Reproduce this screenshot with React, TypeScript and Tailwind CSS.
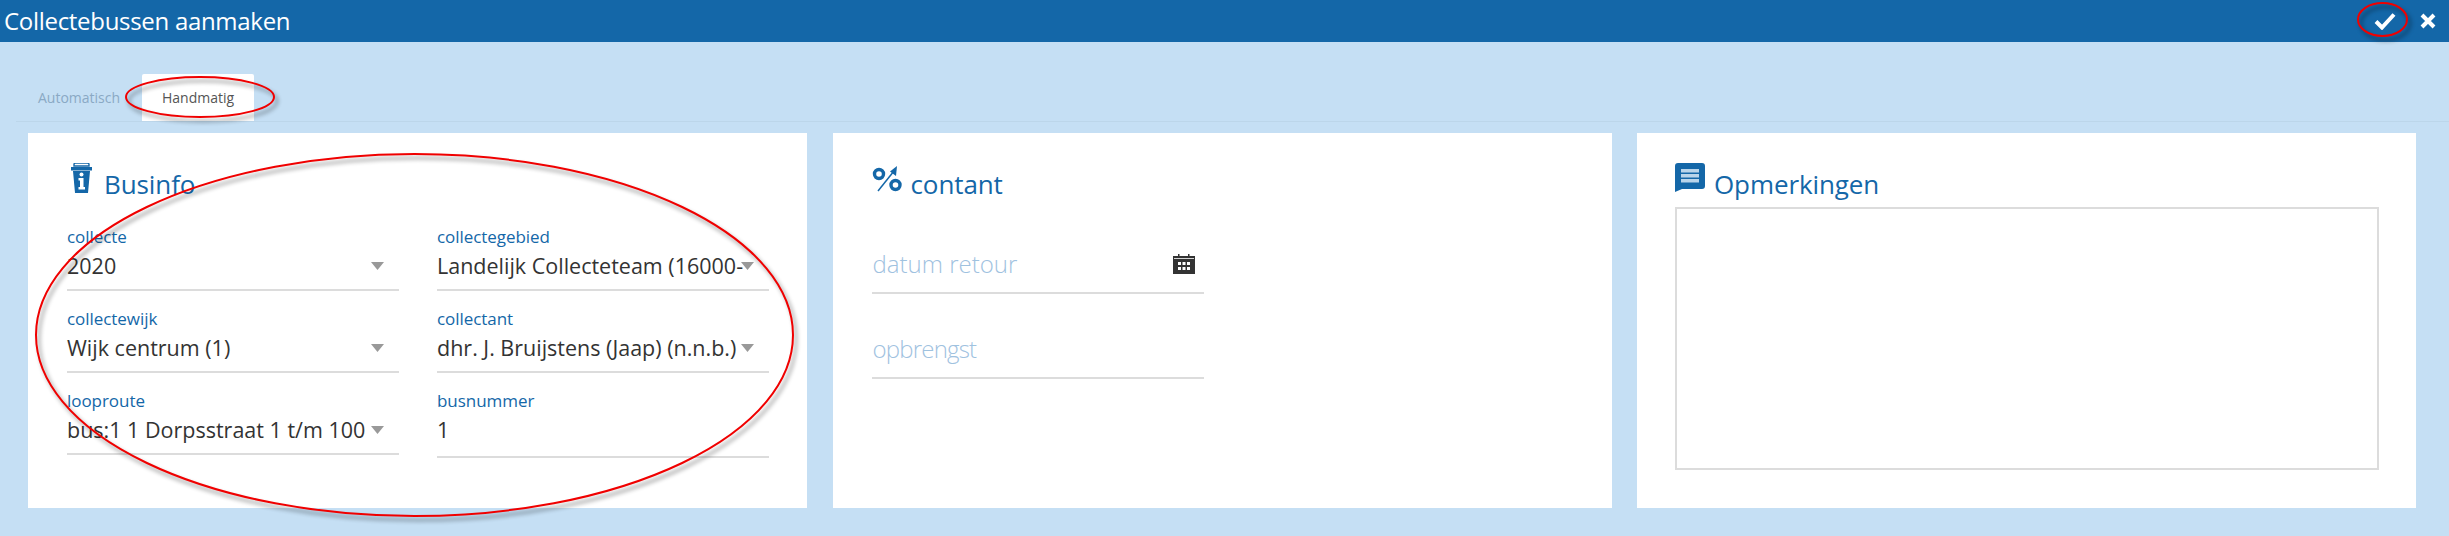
const font = "font-['Open_Sans','Noto_Sans',sans-serif]";

const fields = [
  { label: "collecte", value: "2020", select: true },
  { label: "collectegebied", value: "Landelijk Collecteteam (16000-", select: true },
  { label: "collectewijk", value: "Wijk centrum (1)", select: true },
  { label: "collectant", value: "dhr. J. Bruijstens (Jaap) (n.n.b.)", select: true },
  { label: "looproute", value: "bus:1 1 Dorpsstraat 1 t/m 100", select: true },
  { label: "busnummer", value: "1", select: false },
];

const Field = ({ label, value, select }: { label: string; value: string; select: boolean }) => (
  <div className={`${select ? "h-[65px]" : "h-[68px]"} border-b-2 border-[#dcdcdc]`}>
    <div className="h-[22px] text-[17px] leading-[22px] text-[#1467a8] tracking-[-0.05px]">{label}</div>
    <div className="flex h-[36px] items-center">
      <div className="w-[304px] whitespace-nowrap text-[21.500px] text-[#333]">{value}</div>
      {select && (
        <svg width="13" height="8" viewBox="0 0 13 8" className="shrink-0">
          <path d="M0 0h13L6.5 8z" fill="#999" />
        </svg>
      )}
    </div>
  </div>
);

const CardTitle = ({ icon, title }: { icon: React.ReactNode; title: string }) => (
  <div className="flex h-[32px] items-start gap-[9px]">
    {icon}
    <span className="mt-[5px] text-[26px] leading-[32px] text-[#1467a8] tracking-[-0.1px]">{title}</span>
  </div>
);

const BusIcon = () => (
  <svg width="21" height="30" viewBox="0 0 21 30" className="ml-[4px] mr-[3px]">
    <path d="M3 1.5C3 .7 3.7 0 4.5 0h12c.8 0 1.500.7 1.500 1.500V3H3z" fill="none" stroke="#1467a8" strokeWidth="1.400" />
    <path d="M0 4h21v3.500H0z" fill="#1467a8" />
    <path d="M2 8h17l-2 22H4z" fill="#1467a8" />
    <circle cx="10.500" cy="11.500" r="2" fill="#fff" />
    <path d="M7.500 15h5v9h1.500v2.500H7.500V24H9v-6.500H7.500z" fill="#fff" />
  </svg>
);

const PercentIcon = () => (
  <svg width="30" height="26" viewBox="0 0 30 26" className="mt-[3px]">
    <circle cx="7" cy="8" r="4.500" fill="none" stroke="#1467a8" strokeWidth="3.400" />
    <circle cx="23.500" cy="19" r="4.500" fill="none" stroke="#1467a8" strokeWidth="3.400" />
    <path d="M6 25L22 5" stroke="#1467a8" strokeWidth="1.500" />
    <path d="M25 0l-1 10-6-4.500z" fill="#1467a8" />
  </svg>
);

const CommentIcon = () => (
  <svg width="30" height="29" viewBox="0 0 30 29">
    <path d="M3 0h24a3 3 0 0 1 3 3v20a3 3 0 0 1-3 3H7l-7 3V3a3 3 0 0 1 3-3z" fill="#1467a8" />
    <path d="M6 6h18v3.500H6zM6 11h18v3.500H6zM6 16h18v3.500H6z" fill="#b9d4ea" />
  </svg>
);

const CalendarIcon = () => (
  <svg width="22" height="20" viewBox="0 0 22 20" className="shrink-0">
    <path d="M5 0h1.500v2H15V0h1.500v2H22v18H0V2h5z" fill="#333" />
    <path d="M1 4.500h20" stroke="#fff" strokeWidth="0.800" />
    <path d="M5 8h3v3H5zM9.500 8h3v3h-3zM14 8h3v3h-3zM5 13h3v3H5zM9.500 13h3v3h-3zM14 13h3v3h-3z" fill="#fff" />
  </svg>
);

// rode annotaties uit de schermafdruk
const Annotation = ({ className, width, height }: { className: string; width: number; height: number }) => (
  <svg
    width={width + 12}
    height={height + 12}
    className={`pointer-events-none absolute drop-shadow-[3px_4px_2px_rgba(0,0,0,0.45)] ${className}`}
  >
    <ellipse cx={width / 2 + 1} cy={height / 2 + 1} rx={width / 2} ry={height / 2} fill="none" stroke="#f00000" strokeWidth="2" />
  </svg>
);

export default function App() {
  return (
    <div className={`relative h-[536px] w-full overflow-hidden bg-[#c5dff4] ${font}`}>
      <header className="flex h-[42px] items-center justify-between bg-[#1467a8] pl-[4px] pr-[13px] text-white">
        <h1 className="text-[24px] tracking-[-0.3px]">Collectebussen aanmaken</h1>
        <div className="flex items-center gap-[24px]">
          <svg width="22" height="18" viewBox="0 0 22 18">
            <path d="M2 9.500l6 6L20 2.500" fill="none" stroke="#fff" strokeWidth="4" />
          </svg>
          <svg width="16" height="16" viewBox="0 0 16 16">
            <path d="M2 2l12 12M14 2L2 14" fill="none" stroke="#fff" strokeWidth="4" />
          </svg>
        </div>
      </header>

      <div className="pt-[32px]">
        <nav className="ml-[16px] flex h-[48px] items-stretch border-b border-[#bcd6ea] text-[14px]">
          <a className="flex w-[126px] items-center justify-center text-[#8aa9c4]">Automatisch</a>
          <a className="flex w-[112px] items-center justify-center rounded-t-[2px] bg-white text-[#555]">Handmatig</a>
        </nav>

        <main className="mt-[11px] grid w-[2388px] ml-[28px] grid-cols-3 gap-[25.500px]">
          <section className="h-[375px] bg-white pl-[39px] pr-[38px] pt-[30px]">
            <CardTitle icon={<BusIcon />} title="Businfo" />
            <div className="mt-[31px] grid grid-cols-2 items-start gap-x-[38px] gap-y-[17px]">
              {fields.map((field) => (
                <Field key={field.label} {...field} />
              ))}
            </div>
          </section>

          <section className="h-[375px] bg-white pl-[39px] pt-[30px]">
            <CardTitle icon={<PercentIcon />} title="contant" />
            <div className="mt-[35px] w-[332px] text-[24px] font-light text-[#9fc2df]">
              <div className="flex h-[64px] items-center justify-between border-b-2 border-[#dcdcdc] pl-[1px] pr-[9px] pt-[5px]">
                <span>datum retour</span>
                <CalendarIcon />
              </div>
              <div className="mt-[21px] flex h-[64px] items-center border-b-2 border-[#dcdcdc] pl-[1px] pt-[5px] tracking-[-0.8px]">opbrengst</div>
            </div>
          </section>

          <section className="h-[375px] bg-white pl-[38px] pt-[30px]">
            <CardTitle icon={<CommentIcon />} title="Opmerkingen" />
            <div className="mt-[12px] h-[263px] w-[704px] border-2 border-[#dcdcdc]" />
          </section>
        </main>
      </div>

      <Annotation className="left-[2357px] top-[2px]" width={49} height={33} />
      <Annotation className="left-[125px] top-[76px]" width={148} height={40} />
      <Annotation className="left-[35px] top-[153px]" width={757} height={362} />
    </div>
  );
}
